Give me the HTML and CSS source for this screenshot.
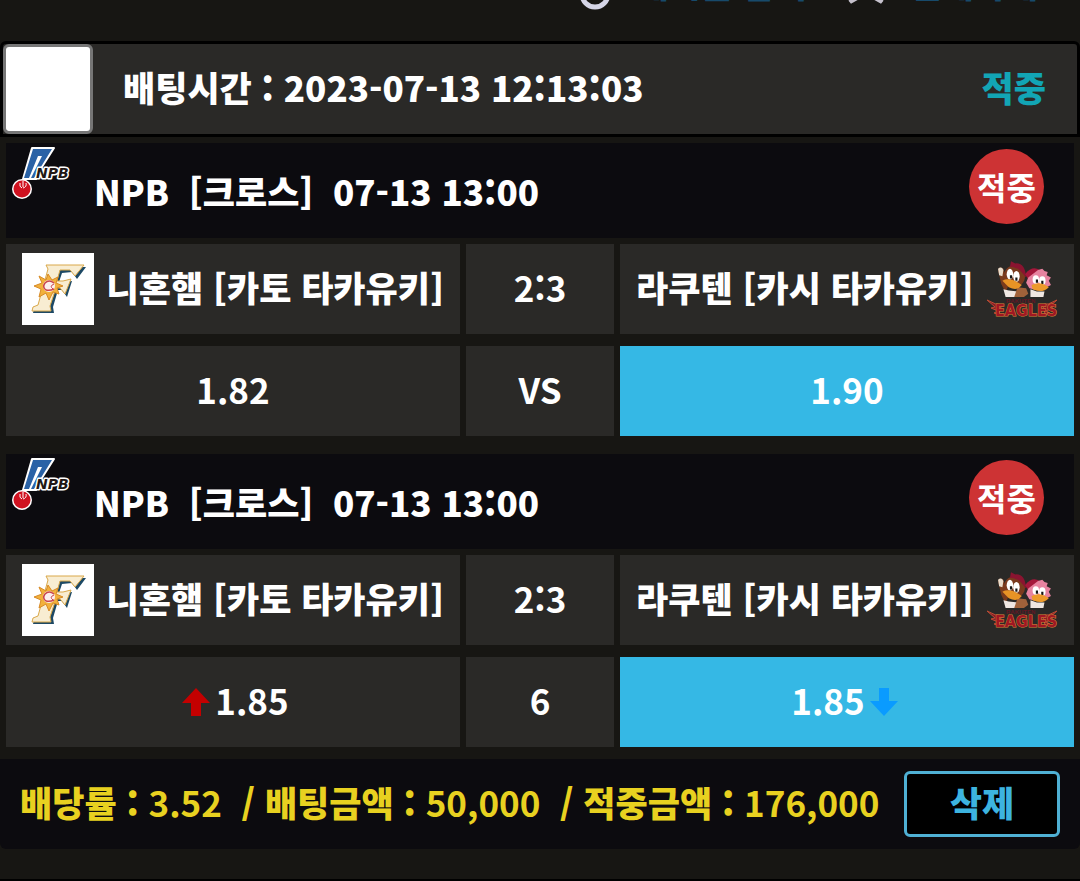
FILE: index.html
```html
<!DOCTYPE html>
<html lang="ko">
<head>
    <meta charset="UTF-8">
    <meta name="viewport" content="width=device-width, initial-scale=1.0">
    <title>배팅내역</title>
    <link rel="stylesheet" href="styles.css">
</head>
<body>
    <svg class="defs" width="0" height="0">
        <symbol id="npb" viewBox="0 0 64 54">
            <path d="M20 1 L42 1 L28 23 L24 32 L11 32 Z" fill="#fff" stroke="#fff" stroke-width="2" stroke-linejoin="round"/>
            <path d="M21 2 L40 2 L22 31 L19 31 L30 9 L26 9 L17 31 L12 31 Z" fill="#2a62a6"/>
            <text x="24" y="31" class="npb-text">NPB</text>
            <circle cx="10" cy="42" r="10" fill="#fff"/>
            <circle cx="10" cy="42" r="8.5" fill="#d01220"/>
            <path d="M8 36 q-1 4 2 5 M14 36 q1 4 -3 5 M11 34 v6" fill="none" stroke="#fff" stroke-width="1"/>
        </symbol>
        <symbol id="fighters" viewBox="0 0 72 72">
            <rect width="72" height="72" fill="#fff"/>
            <path d="M27 14 L64 14 L55 26 L50 19 L40 20 L37 29 L50 28 L45 44 L40 37 L36 37 L31 54 L32 60 L11 60 L12 56 L17 54 L28 18 Z" fill="#1d4965"/>
            <path d="M24 12 L62 12 L53 23 L48 17 L38 17 L35 28 L41 28 L49 26 L43 41 L38 35 L34 35 L28 53 L29 58 L10 58 L11 54 L16 52 L26 16 Z" fill="#f8edd2" stroke="#d9a84a" stroke-width="1"/>
            <path d="M26 21 L30 27 L36 24 L34 30 L41 33 L35 35 L37 41 L31 39 L27 47 L24 40 L17 44 L19 36 L12 33 L20 30 L17 23 L24 27 Z" fill="#f2b13c" stroke="#d88a25" stroke-width="1"/>
            <circle cx="27" cy="33" r="6" fill="#fbeeee"/>
            <path d="M32 30 Q27 26 23 30 Q20 34 24 37 Q28 38 32 36" fill="none" stroke="#c9474d" stroke-width="1.5"/>
            <path d="M32 31 Q27 33 31 36" fill="none" stroke="#c9474d" stroke-width="1"/>
        </symbol>
        <symbol id="eagles" viewBox="0 0 72 72">
            <g transform="translate(-2 5) scale(1.08)">
                <path d="M16 24 L13 11 Q14 7 18 10 L20 20 L24 22 L20 32 Z" fill="#7a3b1c"/>
                <path d="M13 10 q3 -3 5 1 l-1 6 -3 -1z" fill="#e8dccb"/>
                <circle cx="28" cy="17" r="10" fill="#7a3a1e"/>
                <path d="M24 8 L25 3 L29 5 Q38 4 39 18 L33 11 Q28 8 24 8 Z" fill="#8a1430"/>
                <path d="M38 15 Q45 6 53 12 L51 17 L41 20 Z" fill="#a5173b"/>
                <path d="M50 11 l4 -1 2 2 3 1 -1 3 4 2 -2 3 2 4 -4 2 -8 3 -8 -2 -3 -5 2 -5z" fill="#e783a0"/>
                <ellipse cx="24" cy="15" rx="3" ry="5" fill="#fff"/>
                <ellipse cx="30" cy="17" rx="3" ry="5" fill="#fff"/>
                <ellipse cx="48" cy="20" rx="3" ry="4" fill="#fff"/>
                <ellipse cx="54" cy="21" rx="3" ry="4" fill="#fff"/>
                <path d="M25 16 v3 M30 18 v3 M49 20 v3 M54 21 v3" stroke="#151515" stroke-width="2"/>
                <path d="M18 29 l5 1 9 1 -2 5 h-10z M43 29 l6 2 7 0 -1 5 h-12z" fill="#efe7e2"/>
                <path d="M31 27 l8 1 2 5 -4 3 h-9z" fill="#a0623a"/>
                <path d="M17 21 Q24 17 35 25 Q31 31 23 27 Z" fill="#e79325"/>
                <path d="M44 25 Q52 21 60 27 Q54 33 45 29 Z" fill="#ed9a2b"/>
            </g>
            <text x="20" y="50" class="rakuten-text">RAKUTEN</text>
            <path d="M1 47 Q9 52 18 52 L14 55 L13 62 L8 60 L12 58 L5 55 L9 54 Z M71 47 Q63 52 54 52 L58 55 L59 62 L64 60 L60 58 L67 55 L63 54 Z" fill="#8b1b25" stroke="#bd4b34" stroke-width="1"/>
            <text x="9" y="63" class="eagles-text">EAGLES</text>
        </symbol>
    </svg>

    <nav class="top-menu">
        <a href="#"><svg width="34" height="40" viewBox="0 0 34 40"><circle cx="17" cy="24" r="13" fill="none" stroke="#d5d5e6" stroke-width="5"/></svg><span>게시글 담기</span></a>
        <a href="#"><svg width="38" height="40" viewBox="0 0 38 40"><path d="M19 3 L23 18 L35 32 L19 23 L3 32 L15 18 Z" fill="none" stroke="#c5c1cc" stroke-width="4"/></svg><span>전체삭제</span></a>
    </nav>

    <main class="bet">
        <header class="bet-head">
            <input type="checkbox" id="bet1" class="bet-check">
            <label for="bet1">배팅시간 : 2023-07-13 12:13:03</label>
            <span class="result">적중</span>
        </header>

        <section class="game">
            <div class="game-head">
                <svg class="league" viewBox="0 0 64 54"><use href="#npb"/></svg>
                <h2>NPB&nbsp; [크로스]&nbsp; 07-13 13:00</h2>
                <span class="badge">적중</span>
            </div>
            <div class="row">
                <div class="cell home"><svg class="team" viewBox="0 0 72 72"><use href="#fighters"/></svg><span>니혼햄 [카토 타카유키]</span></div>
                <div class="cell"><span>2:3</span></div>
                <div class="cell away"><span>라쿠텐 [카시 타카유키]</span><svg class="team" viewBox="0 0 72 72"><use href="#eagles"/></svg></div>
            </div>
            <div class="row">
                <div class="cell"><span>1.82</span></div>
                <div class="cell"><span>VS</span></div>
                <div class="cell picked"><span>1.90</span></div>
            </div>
        </section>

        <section class="game">
            <div class="game-head">
                <svg class="league" viewBox="0 0 64 54"><use href="#npb"/></svg>
                <h2>NPB&nbsp; [크로스]&nbsp; 07-13 13:00</h2>
                <span class="badge">적중</span>
            </div>
            <div class="row">
                <div class="cell home"><svg class="team" viewBox="0 0 72 72"><use href="#fighters"/></svg><span>니혼햄 [카토 타카유키]</span></div>
                <div class="cell"><span>2:3</span></div>
                <div class="cell away"><span>라쿠텐 [카시 타카유키]</span><svg class="team" viewBox="0 0 72 72"><use href="#eagles"/></svg></div>
            </div>
            <div class="row">
                <div class="cell"><svg class="arrow" viewBox="0 0 28 28"><path d="M14 0 L28 15 H19 V28 H9 V15 H0 Z" fill="#c40000"/></svg><span>1.85</span></div>
                <div class="cell"><span>6</span></div>
                <div class="cell picked"><span>1.85</span><svg class="arrow" viewBox="0 0 28 28"><path d="M14 28 L28 13 H19 V0 H9 V13 H0 Z" fill="#0a9bff"/></svg></div>
            </div>
        </section>

        <footer class="bet-foot">
            <p>배당률 : <b>3.52</b>&nbsp; / 배팅금액 : <b>50,000</b>&nbsp; / 적중금액 : <b>176,000</b></p>
            <button type="button">삭제</button>
        </footer>
    </main>

    <div class="next-bet"></div>
</body>
</html>
```
FILE: styles.css
```css
* {
    box-sizing: border-box;
}

body {
    margin: 0;
    background-color: #171613;
    color: #fff;
    font-family: "Noto Sans CJK KR", sans-serif;
    font-size: 35px;
    font-weight: 900;
    line-height: 48px;
}

b {
    font-weight: 700;
}

.defs {
    display: none;
}

.top-menu {
    display: flex;
    justify-content: flex-end;
    align-items: flex-end;
    gap: 40px;
    height: 41px;
    padding: 0 42px 31px 0;
    overflow: hidden;
}

.top-menu a {
    display: flex;
    align-items: flex-end;
    gap: 24px;
    color: #174a6b;
    text-decoration: none;
}

.top-menu span {
    margin-bottom: 3px;
    white-space: nowrap;
}

.bet-head {
    display: flex;
    align-items: center;
    height: 96px;
    padding-right: 31px;
    border: 3px solid #000;
    border-radius: 6px 6px 0 0;
    background-color: #2a2927;
}

.bet-check {
    appearance: none;
    flex: none;
    width: 90px;
    height: 90px;
    margin: 0;
    border: 3px solid #767676;
    border-radius: 6px;
    background-color: #fff;
}

.bet-head label {
    flex: 1;
    padding: 0 0 4px 30px;
}

.result {
    padding-bottom: 4px;
    color: #12a5b5;
}

.game {
    padding: 6px 6px 12px;
}

.game-head {
    display: flex;
    align-items: center;
    height: 95px;
    padding: 0 30px 0 6px;
    background-color: #0c0b0f;
}

.league {
    flex: none;
    align-self: flex-start;
    width: 64px;
    height: 54px;
    margin: 4px 18px 0 0;
}

.npb-text {
    font: italic bold 14px "DejaVu Sans", sans-serif;
    fill: #221815;
    stroke: #fff;
    stroke-width: 3px;
    stroke-linejoin: round;
    paint-order: stroke;
}

.rakuten-text {
    font: bold 6px "Liberation Sans", sans-serif;
    fill: #641724;
}

.eagles-text {
    font: bold 16px "DejaVu Sans Condensed", "DejaVu Sans", sans-serif;
    fill: #a01723;
    stroke: #d88238;
    stroke-width: 1px;
    paint-order: stroke;
}

h2 {
    flex: 1;
    margin: 0;
    font-size: 35px;
    font-weight: 900;
    line-height: 48px;
}

.badge {
    width: 75px;
    height: 75px;
    margin-bottom: 8px;
    border-radius: 50%;
    background-color: #cd3334;
    font-size: 32px;
    font-weight: 700;
    line-height: 75px;
    text-align: center;
}

.row {
    display: grid;
    grid-template-columns: 454fr 148fr 454fr;
    gap: 6px;
    margin-top: 6px;
}

.row + .row {
    margin-top: 12px;
}

.cell {
    display: flex;
    align-items: center;
    justify-content: center;
    height: 90px;
    background-color: #2a2927;
    font-weight: 700;
    white-space: nowrap;
}

.cell span {
    padding-bottom: 4px;
}

.home,
.away {
    justify-content: space-between;
    padding: 0 16px;
    font-weight: 900;
}

.team {
    flex: none;
    width: 72px;
    height: 72px;
}

.picked {
    background-color: #35b8e5;
}

.arrow {
    width: 28px;
    height: 28px;
    margin: 0 5px;
}

.bet-foot {
    display: flex;
    align-items: center;
    justify-content: space-between;
    height: 90px;
    padding: 0 20px;
    border-radius: 0 0 6px 6px;
    background-color: #0c0b0f;
    color: #e8d120;
}

.bet-foot p {
    margin: 0;
    padding-bottom: 4px;
    white-space: nowrap;
}

.bet-foot button {
    flex: none;
    width: 156px;
    height: 66px;
    padding: 0 0 4px;
    border: 3px solid #4fb0d4;
    border-radius: 6px;
    background-color: #000;
    color: #3db4e0;
    font: inherit;
}

.next-bet {
    margin-top: 30px;
    border-top: 2px solid #000;
}
```
